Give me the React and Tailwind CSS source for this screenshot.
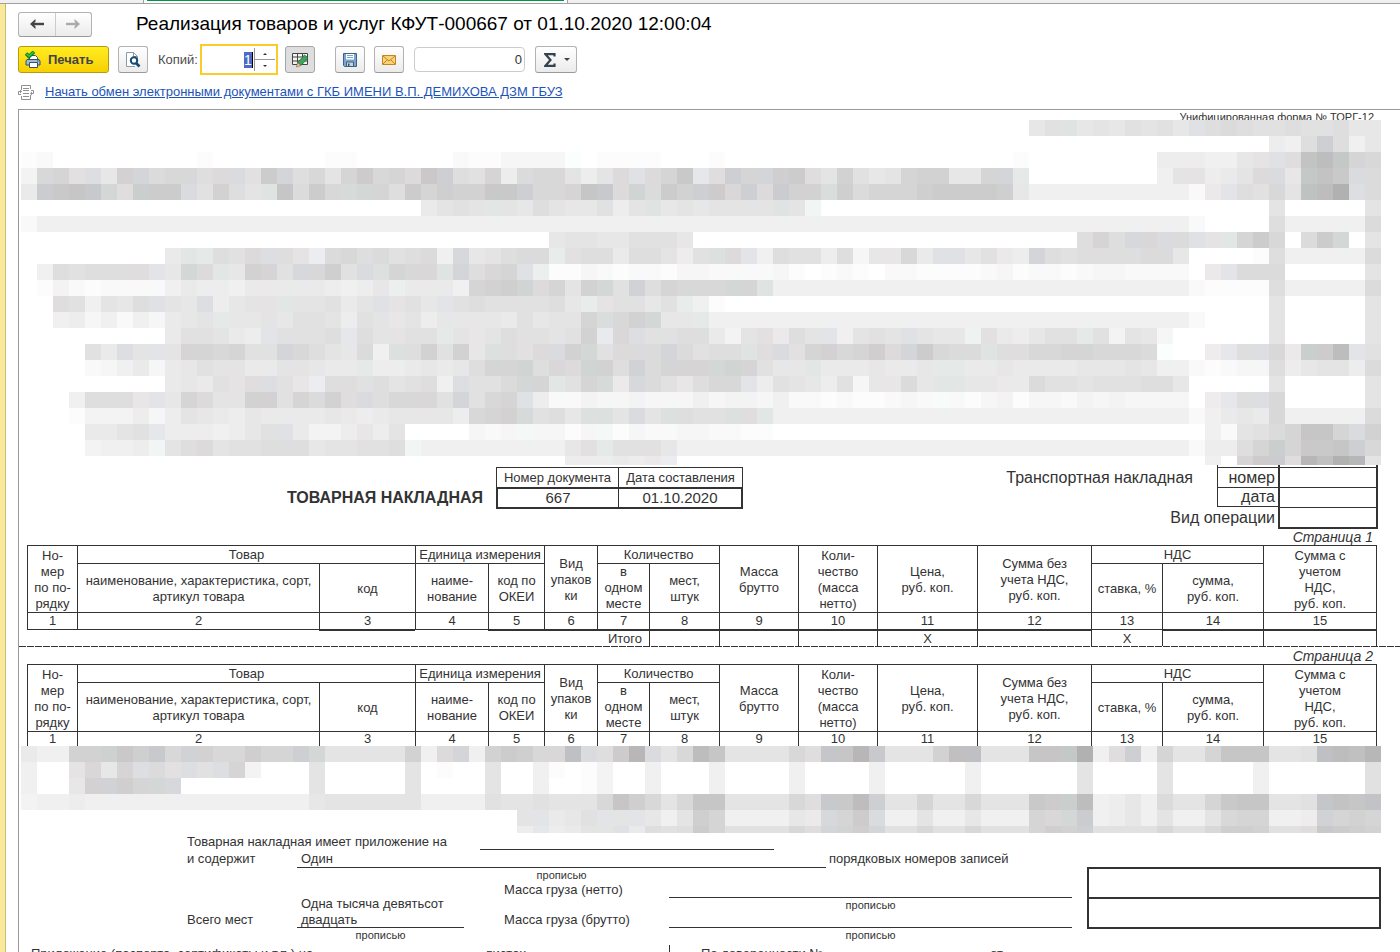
const LINE = "border-[#333]";

// Pixelated areas: run length + shade letter ("a" lightest, "z" darkest, "." empty),
// optionally followed by a tint: ^ warm, ~ cool, * green.
const HEADER_MOSAIC = [
  "63. hjj*hihjijhj~klk2jk2jk2h",
  "78. fekp~keh",
  "ab9.a7.2a6.b 2a4ca*.4a3.a18.a8. 3f2ehi^j~k^tvs*nm",
  "dmnj^k~ho^n~l2mkl^l~j^qn~kminq^mnl^r^p~k jn^flmmifil^j~l^nrh~k^p~nn~p^qk^iojhino o2hnn~h*8.eii^fgil^l~h^s*trl~l",
  "gq~rsr~n*k^q*2ql~jokij*slqmm*n*nkqnpo orrp~mmn^sr~l^o*lqop~q^m^p~l^q~ool*plnnnp 4qph10ebg^i~kjmiu*v^zk~l",
  "25.gij ii*ihkihhjfij*hih4ij*id*7. 21.i5.i",
  "b27e 29e 16eb4.k5el",
  "28. 5.hii2h3jh15. 9.kn^km~m^l~lj~i^i*nqm.lqn*.i",
  "9.gi*h*kjl^k~ki^f~lmkljklem~ hikllg*j^kkgkkif^jk*l^i~ekjjfkchh^mg j~j~hjg^fn~kj4k2lh4.ak5el",
  ".ekjkkkk^i~hn*l^i*hon^jm~mpjl~k*nmm^j*n~ km^nj~f*2acba2ba2c4bca.aba.2ba 3abca2bab2c4b.g^i~3l5.i",
  ".adbab3beg2fe5gfefh^f*3ge nopo*l^nion*jo~kn3mn*nj*10e 16eb4ak5el",
  "2.k^jeihkj~ihk~fhii^i*2ijgij~i^jhi~j k4jkhg*i^jjhjg*ea13. 21.i5.i",
  "2.efcebecghih*2hih2jifjih^if2h 2hgjh2inl*mon*hhh*14e 16eb4.i5.i",
  "9.gjjigfi~3jkh~kii^2jh*i h^ik2jijog~m^k~2j2kgdij^g^kii~e^ijij~i hhe*j^gfhjjh*jdihc6.i5.i",
  "4.jgk~ii~in^nmn2jn~mkihlek*kojo hk*kj^l^l~on*jl^lln~ljkkj*k^l~j^no^mnp^l^n~q mllj*kk^mmnnmmmla*2.f^h~kk~mg^q*q^vi~j",
  "4.bcegcghj2i2g2ih2gh*2fghgh knno*km^l^o*oko~lnnn^n*o*n^jhhi*ggghggh h*h*ggh4g3hih2ebabcckfhiifl",
  "9.ghgji^k^k~jh^f~kkjkijkek~ jjln*ni*jnm*g^m~ljh^kmmi~fjihfjchh^lh i*i*hhg^gljji3jkkh5.i5.i",
  "3.ekkkh^i~hnl^iioo^jnlok^l~kmmm^jn~ jmnj~f2bd2cd3cec2dce2bab2abcb b*bacda2cbdcd4c.f^h~kk~m5.i",
  "3.a3dfcfihgfh4ghgfg4hf mno^m*jkhk*k*il~ik*kjjk*k^i*10e 16ebeghgm5el",
  "4.ggijh~fffefhjj~gddfh^fi4. cbcc*ccacc*acbbccbbaa10. 17.ebijlnssnl~o",
  "4.deefd*ikl^ijjkkkhiijjkd*3e 6ehj^h*3jh16e 16ebffknq*nr^rsp~m",
  "28. 6.3fgfg^f~16. 17.e.n^q^q~k^xuzxi",
];

const ROWS_MOSAIC = [
  "geeoop*r^pr~mo~o^mmp^nnp~n*5ioel^n~ eoqpmm^u~l~kq^x^l~imvs4imk^s~sx^r~3i ou^u~3iss^s*zek^p~en2insss2iju~vux",
  "e2.i^m^hn^k~lj^k~jk~n^d3.i5.i.a. .i2.ea.ad2.e3.e4.e4.e3. 2.e6.i4.i5.e6.j",
  "e2.ho^o~p^nn*m~8.i5.i3. .i2.e2.ad2.e3.e4.e4.e3. 2.e6.i4.i5.e6.j",
  "d2ef14eh6i3e ej2ij3ims^pmim2s4imk^r~rv^p~2in 2im3irq^q*vefhel2inr2s2ijs~tst~",
  "28. 3.ii~ghji~ii~heipn4ehg^m~nq^l~2ei 2eh3enm^n*q~efhei2eim2n2ef^o~non",
  "28. 3.f^h~fg2ij~gkjkqn4jmk^n~o*p^n~2jm 2jm3jnpop~4jm2jm2po2jkrqpo",
];

const TINTS = { "^": [2, -1, 0], "~": [-2, 0, 3], "*": [-2, 2, 0] };

function parseCells(row) {
  const cells = [];
  let x = 0;
  for (const [, count, shade, tint] of row.matchAll(/(\d*)([a-z.])([\^~*]?)/g)) {
    const n = Number(count || 1);
    if (shade !== ".") {
      const level = 255 - 3 * (shade.charCodeAt(0) - 96);
      const rgb = (TINTS[tint] || [0, 0, 0]).map((d) => level + d);
      cells.push({ x, n, fill: `rgb(${rgb.join(",")})` });
    }
    x += n;
  }
  return cells;
}

function Mosaic({ rows, height }) {
  return (
    <svg width="1360" height={height} shapeRendering="crispEdges" aria-hidden="true" className="ml-0.5 block shrink-0">
      {rows.map((row, y) =>
        parseCells(row).map((c) => (
          <rect key={`${y}-${c.x}`} x={c.x * 16} y={y * 16} width={c.n * 16} height="16" fill={c.fill} />
        ))
      )}
    </svg>
  );
}

function ArrowIcon({ flip, color }) {
  return (
    <svg width="14" height="10" viewBox="0 0 14 10" className={flip ? "-scale-x-100" : ""}>
      <path d="M2 5h12" fill="none" stroke={color} strokeWidth="2.4" />
      <path d="M5.500 0v2.500L3.500 5l2 2.500V10L0 5z" fill={color} />
    </svg>
  );
}

function PrinterIcon() {
  return (
    <svg width="16" height="17" viewBox="0 0 16 17">
      <path d="M4.500 8V4.500h6l2 2V8" fill="#fff" stroke="#35506b" />
      <path d="M2 8.500h12l1 1.500v4H1v-4z" fill="#9fbdd6" stroke="#35506b" />
      <path d="M4.500 11.500h8v5h-8z" fill="#fff" stroke="#35506b" />
      <path d="M12 10h1.500" stroke="#35506b" />
      <path d="M1 2.500 4 5.500 9 .8" fill="none" stroke="#0c7a1a" strokeWidth="3.600" />
      <path d="M1.500 2.800 4 5.200 8.500 1.200" fill="none" stroke="#33c640" strokeWidth="1.600" />
    </svg>
  );
}

function PreviewIcon() {
  return (
    <svg width="16" height="17" viewBox="0 0 16 17">
      <path d="M10 15.500H1.500v-14h7l4 4V8" fill="#fff" stroke="#8c9aa8" />
      <path d="M8.500 1.500v4h4" fill="none" stroke="#8c9aa8" />
      <circle cx="9" cy="9.500" r="3.200" fill="#fff" stroke="#164a73" strokeWidth="2" />
      <path d="m11 12 3.500 3.500" stroke="#164a73" strokeWidth="2.600" />
    </svg>
  );
}

function EditTableIcon() {
  return (
    <svg width="17" height="16" viewBox="0 0 17 16">
      <path d="M.5 1.500h15v11H.5zM.5 5h15M.5 9h15M5.500 1.500v11M10.500 1.500v11" fill="#f4f4f4" stroke="#444" />
      <path d="m5.500 10.500 7-7.500 3.500 3-7 7.500z" fill="#3fa45b" stroke="#24713b" strokeWidth=".8" />
      <path d="m5.500 10.500 3.500 3-4.500 1.500z" fill="#f0c9a0" stroke="#8b5a3a" strokeWidth=".6" />
    </svg>
  );
}

function SaveIcon() {
  return (
    <svg width="14" height="14" viewBox="0 0 14 14">
      <path d="M.5.5h13v13h-12l-1-1z" fill="#7ba4cf" stroke="#3d6288" />
      <path d="M3 1h8v5.500H3z" fill="#fff" />
      <path d="M4 2.500h6M4 4.500h6" stroke="#7ba4cf" />
      <path d="M3.500 9h7v4.500h-7z" fill="#c9d3da" stroke="#3d6288" />
      <path d="M5 10.500h1.500V13H5z" fill="#33526f" />
    </svg>
  );
}

function MailIcon() {
  return (
    <svg width="14" height="10" viewBox="0 0 14 10">
      <path d="M.5.5h13v9H.5z" fill="#fbd275" stroke="#c08628" />
      <path d="m1 1 6 5 6-5M1 9l4.500-4.500M13 9 8.500 4.500" fill="none" stroke="#c08628" />
    </svg>
  );
}

function ExchangeIcon() {
  return (
    <svg width="16" height="15" viewBox="0 0 16 15" fill="none" stroke="#8f8f8f">
      <path d="M3.500 5V.5h9V4M3.500 11v3.500h9V10M5 3.500h6M5 5.500h6M5 8.500h6M5 11.500h6" />
      <path d="M3 9.500H.5v-3H2M13 5.500h2.500v3H14" />
      <path d="M2 4.500v4l2-2zM14 6.500v4l-2-2z" fill="#8f8f8f" stroke="none" />
    </svg>
  );
}

function SigmaIcon() {
  return (
    <svg width="12" height="14" viewBox="0 0 12 14">
      <path d="M10.500 3.500V1.200H1.500L6.500 7l-5 5.800h9v-2.300" fill="none" stroke="#33434f" strokeWidth="2.200" />
    </svg>
  );
}

function ToolButton({ label, className = "", children }) {
  return (
    <button
      aria-label={label}
      className={`flex h-[27px] items-center justify-center rounded-[3px] border border-[#b3b3b3] border-b-[#999] bg-linear-to-b from-white to-[#ebebeb] ${className}`}
    >
      {children}
    </button>
  );
}

function Toolbar() {
  return (
    <div className="flex h-[31px] items-center">
      <button className="flex h-[27px] w-[91px] items-center gap-[7px] rounded-[3px] border border-[#b39b1a] bg-linear-to-b from-[#ffec1f] to-[#f7d000] pl-[6px] text-[13px] font-bold text-[#444]">
        <PrinterIcon />
        Печать
      </button>
      <ToolButton label="Предварительный просмотр" className="ml-[9px] w-[30px]">
        <PreviewIcon />
      </ToolButton>
      <label htmlFor="copies" className="ml-[10px] w-[42px] text-[13px] text-[#4d4d4d]">
        Копий:
      </label>
      <div className="flex h-[31px] w-[78px] items-center border-2 border-[#fbcb2b] bg-white pr-px">
        <div className="flex flex-1 justify-end">
          <input
            id="copies"
            defaultValue="1"
            className="h-4 w-[9px] border-r border-black bg-[#4d6bc4] text-center text-sm text-white outline-none"
          />
        </div>
        <div className="ml-px flex h-[23px] w-[21px] flex-col border-l border-[#999]">
          <button aria-label="Больше" className="flex flex-1 items-center justify-center border-b border-[#999]">
            <svg width="4" height="2"><path d="M0 2 2 0l2 2z" fill="#333" /></svg>
          </button>
          <button aria-label="Меньше" className="flex flex-1 items-center justify-center">
            <svg width="4" height="2"><path d="M0 0h4L2 2z" fill="#333" /></svg>
          </button>
        </div>
      </div>
      <button
        aria-label="Редактирование"
        className="ml-[7px] flex h-[27px] w-[30px] items-center justify-center rounded-[3px] border border-[#a6a6a6] bg-[#dedede]"
      >
        <EditTableIcon />
      </button>
      <ToolButton label="Сохранить" className="ml-5 w-[30px]">
        <SaveIcon />
      </ToolButton>
      <ToolButton label="Отправить" className="ml-[9px] w-[30px]">
        <MailIcon />
      </ToolButton>
      <input
        aria-label="Сумма"
        defaultValue="0"
        className="ml-[10px] h-[25px] w-[111px] rounded-[4px] border border-[#ccc] pr-[2px] text-right text-[13px] text-[#333]"
      />
      <ToolButton label="Итоги" className="ml-[10px] w-[42px] gap-2 pl-px">
        <SigmaIcon />
        <svg width="6" height="3"><path d="M0 0h6L3 3z" fill="#444" /></svg>
      </ToolButton>
    </div>
  );
}

const COL_WIDTHS = [
  "w-[50px]", "w-[242px]", "w-[96px]", "w-[73px]", "w-[56px]", "w-[53px]", "w-[52px]", "w-[70px]",
  "w-[79px]", "w-[79px]", "w-[100px]", "w-[114px]", "w-[71px]", "w-[101px]", "",
];

function Th({ children, className = "p-0", ...rest }) {
  return (
    <th {...rest} className={`border-t border-l ${LINE} text-center align-middle font-normal whitespace-pre-line ${className}`}>
      {children}
    </th>
  );
}

function GoodsTable({ total }) {
  const thin = `border-t ${LINE} p-0`;
  const thick = `border-t-2 ${LINE} p-0`;
  const low = "p-0 pt-0.5";
  return (
    <table className="ml-2 w-[calc(100%-31px)] table-fixed border-separate border-spacing-0 text-[13px] leading-4">
      <colgroup>
        {COL_WIDTHS.map((w, i) => (
          <col key={i} className={w} />
        ))}
      </colgroup>
      <thead className="[&_tr>*:last-child]:border-r [&_tr:nth-child(2)>*:last-child]:border-r-0">
        <tr className="h-[18px]">
          <Th rowSpan={2} className={low}>{"Но-\nмер\nпо по-\nрядку"}</Th>
          <Th colSpan={2}>Товар</Th>
          <Th colSpan={2}>Единица измерения</Th>
          <Th rowSpan={2} className={low}>{"Вид\nупаков\nки"}</Th>
          <Th colSpan={2}>Количество</Th>
          <Th rowSpan={2} className={low}>{"Масса\nбрутто"}</Th>
          <Th rowSpan={2} className={low}>{"Коли-\nчество\n(масса\nнетто)"}</Th>
          <Th rowSpan={2} className={low}>{"Цена,\nруб. коп."}</Th>
          <Th rowSpan={2} className={low}>{"Сумма без\nучета НДС,\nруб. коп."}</Th>
          <Th colSpan={2}>НДС</Th>
          <Th rowSpan={2} className={low}>{"Сумма с\nучетом\nНДС,\nруб. коп."}</Th>
        </tr>
        <tr className="h-[49px]">
          <Th className={low}>{"наименование, характеристика, сорт,\nартикул товара"}</Th>
          <Th className={low}>код</Th>
          <Th className={low}>{"наиме-\nнование"}</Th>
          <Th className={low}>{"код по\nОКЕИ"}</Th>
          <Th>{"в\nодном\nместе"}</Th>
          <Th className={low}>{"мест,\nштук"}</Th>
          <Th className={low}>ставка, %</Th>
          <Th className={low}>{"сумма,\nруб. коп."}</Th>
        </tr>
        <tr className={total ? "h-[17px] leading-4" : "h-[15px] leading-[14px]"}>
          {COL_WIDTHS.map((_, i) => (
            <Th key={i}>{i + 1}</Th>
          ))}
        </tr>
      </thead>
      {total && (
        <tbody>
          <tr className="h-[17px] text-center leading-[15px]">
            <td colSpan={2} className={thin} />
            <td className={thick} />
            <td className={thin} />
            <td colSpan={3} className={`${thick} pr-[7px] text-right`}>Итого</td>
            <td className={`${thick} border-l`} />
            <td className={`${thick} border-l`} />
            <td className={`${thick} border-l`} />
            <td className={`${thick} border-l`}>X</td>
            <td className={`${thick} border-l`} />
            <td className={`${thin} border-l`}>X</td>
            <td className={`${thick} border-l`} />
            <td className={`${thick} border-x`} />
          </tr>
        </tbody>
      )}
    </table>
  );
}

function DocumentHeading() {
  return (
    <div className="flex h-16 items-start">
      <h2 className="mt-[23px] w-[464px] text-right text-base leading-5 font-bold">ТОВАРНАЯ НАКЛАДНАЯ</h2>
      <table className="mt-0.5 ml-[13px] w-[247px] table-fixed border-separate border-spacing-0">
        <thead>
          <tr className="h-5 text-[13px] leading-4">
            <th className={`w-[122px] border-t border-l ${LINE} p-0 font-normal whitespace-nowrap`}>Номер документа</th>
            <th className={`border-t border-x ${LINE} p-0 font-normal whitespace-nowrap`}>Дата составления</th>
          </tr>
        </thead>
        <tbody>
          <tr className="h-[22px] text-center text-[15px] leading-[18px]">
            <td className={`border-y-2 border-l-2 ${LINE} p-0`}>667</td>
            <td className={`border-y-2 border-r-2 border-l ${LINE} p-0`}>01.10.2020</td>
          </tr>
        </tbody>
      </table>
      <div className="flex flex-1 justify-end text-base">
        <span className="mt-0.5 mr-[5px] leading-[22px]">Транспортная накладная</span>
      </div>
      <table className="mr-[22px] w-[180px] table-fixed border-separate border-spacing-0 text-right text-base leading-[18px]">
        <tbody>
          <tr className="h-0.5">
            <td className="w-[19px] p-0" />
            <td className={`w-[61px] border-l ${LINE} p-0`} />
            <td className={`border-x-2 ${LINE} p-0`} />
          </tr>
          <tr className="h-5">
            <td className="p-0" />
            <td className={`border-t border-l ${LINE} p-0 pr-[3px]`}>номер</td>
            <td className={`border-x-2 border-t ${LINE} p-0`} />
          </tr>
          <tr className="h-5">
            <td className="p-0" />
            <td className={`border-y border-l ${LINE} p-0 pr-[3px]`}>дата</td>
            <td className={`border-x-2 border-t ${LINE} p-0`} />
          </tr>
          <tr className="h-[22px]">
            <td colSpan={2} className="p-0 pr-[3px]">
              <div className="flex justify-end whitespace-nowrap">Вид операции</div>
            </td>
            <td className={`border-x-2 border-t border-b-2 ${LINE} p-0`} />
          </tr>
        </tbody>
      </table>
    </div>
  );
}

function Caption({ className }) {
  return <div className={`h-[13px] text-center text-[11px] leading-[14px] ${className}`}>прописью</div>;
}

function CargoSummary() {
  return (
    <div className="flex text-[13px] leading-[18px]">
      <div className="w-[1053px] shrink-0">
        <div className="flex h-[17px] pl-[168px]">
          <span className="w-[293px]">Товарная накладная имеет приложение на</span>
          <span className={`w-[294px] border-b ${LINE}`} />
        </div>
        <div className="flex h-[18px] pl-[168px]">
          <span className="w-[110px]">и содержит</span>
          <span className={`w-[529px] border-b ${LINE} pl-1`}>Один</span>
          <span className="pl-[3px]">порядковых номеров записей</span>
        </div>
        <Caption className="ml-[278px] w-[529px]" />
        <div className="flex pl-[168px]">
          <div className="flex h-[47px] items-end leading-4">
            <span className="w-[110px]">Всего мест</span>
            <span className={`h-8 w-[167px] border-b ${LINE} pl-1`}>Одна тысяча девятьсот двадцать</span>
          </div>
          <div className="ml-10">
            <div className="flex h-[17px]">
              <span className="w-[165px]">Масса груза (нетто)</span>
              <span className={`w-[403px] border-b ${LINE}`} />
            </div>
            <Caption className="ml-[165px] w-[403px]" />
            <div className="flex h-[17px]">
              <span className="w-[165px]">Масса груза (брутто)</span>
              <span className={`w-[403px] border-b ${LINE}`} />
            </div>
          </div>
        </div>
        <div className="flex pl-[278px]">
          <Caption className="w-[167px]" />
          <Caption className="ml-[205px] w-[403px]" />
        </div>
      </div>
      <div className={`mt-[34px] mr-[19px] ml-[15px] h-[62px] flex-1 border-2 ${LINE}`}>
        <div className={`h-[30px] border-b-2 ${LINE}`} />
      </div>
    </div>
  );
}

function AttachmentRow() {
  return (
    <div className="mt-1 flex pl-3 text-[13px] leading-[18px]">
      <span className="w-[454px]">Приложение (паспорта, сертификаты и т.п.) на</span>
      <span className="w-[184px]">листах</span>
      <span className={`w-[321px] border-l ${LINE} pl-[31px]`}>По доверенности №</span>
      <span>от</span>
    </div>
  );
}

export default function App() {
  return (
    <div className="flex h-screen flex-col overflow-hidden bg-white font-['Liberation_Sans',Arial,sans-serif] text-[#333]">
      <div className="flex h-1 shrink-0 border-b border-[#a0a0a0]">
        <div className="w-36 border-r border-[#a0a0a0] bg-[#f0f0f0]" />
        <div className="ml-[3px] h-px w-[417px] bg-[#009646]" />
        <div className="ml-[3px] flex-1 border-l border-[#a0a0a0] bg-[#f0f0f0]" />
      </div>
      <div className="flex min-h-0 flex-1">
        <div className="w-1.5 shrink-0 border-r border-[#cdb96f] bg-[#fbe99b]" />
        <main className="flex min-w-0 flex-1 flex-col pl-3">
          <header className="flex h-10 shrink-0 items-center">
            <div className="flex h-[25px] w-[74px] rounded-[3px] border border-[#b3b3b3] border-b-[#999] bg-linear-to-b from-white to-[#ebebeb]">
              <button aria-label="Назад" className="flex flex-1 items-center justify-center border-r border-[#ccc]">
                <ArrowIcon color="#444" />
              </button>
              <button aria-label="Вперед" className="flex flex-1 items-center justify-center">
                <ArrowIcon flip color="#aaa" />
              </button>
            </div>
            <h1 className="ml-11 text-[19px] text-black">Реализация товаров и услуг КФУТ-000667 от 01.10.2020 12:00:04</h1>
          </header>
          <Toolbar />
          <div className="flex h-[34px] shrink-0 items-center gap-[11px]">
            <ExchangeIcon />
            <a href="#exchange" className="text-[13px] text-[#1d54b8] underline">
              Начать обмен электронными документами с ГКБ ИМЕНИ В.П. ДЕМИХОВА ДЗМ ГБУЗ
            </a>
          </div>
          <section className="min-h-0 flex-1 overflow-hidden border-t border-l border-[#999]">
            <div className="h-[10px] overflow-hidden pr-[26px] text-right text-[11px] leading-[14px]">
              Унифицированная форма № ТОРГ-12
            </div>
            <Mosaic rows={HEADER_MOSAIC} height="345" />
            <DocumentHeading />
            <div className="h-4 pr-[27px] text-right text-sm leading-4 italic">Страница 1</div>
            <GoodsTable total />
            <div className="h-px bg-[repeating-linear-gradient(90deg,#333_0_7px,transparent_7px_8px)]" />
            <div className="h-[17px] pr-[27px] text-right text-sm leading-[18px] italic">Страница 2</div>
            <GoodsTable />
            <Mosaic rows={ROWS_MOSAIC} height="87" />
            <CargoSummary />
            <AttachmentRow />
          </section>
        </main>
      </div>
    </div>
  );
}
